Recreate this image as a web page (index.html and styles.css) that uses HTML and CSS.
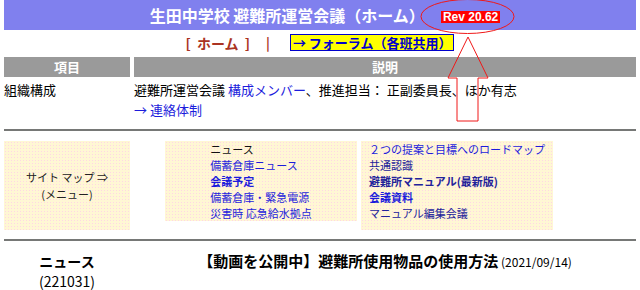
FILE: index.html
```html
<!DOCTYPE html>
<html>

<head>
    <meta charset="utf-8">
    <title>生田中学校 避難所運営会議（ホーム）</title>
    <link rel="stylesheet" href="styles.css">
</head>

<body>
    <header class="title-bar">
        <h1>生田中学校 避難所運営会議（ホーム）</h1>
        <span class="rev">Rev 20.62</span>
    </header>

    <nav class="top-nav">
        <span class="home">[ ホーム ]</span>
        <span class="sep">|</span>
        <a class="forum" href="#">→ フォーラム（各班共用）</a>
    </nav>

    <div class="info">
        <div class="head">項目</div>
        <div class="head">説明</div>
        <div class="cell">組織構成</div>
        <div class="cell">
            避難所運営会議 <a href="#">構成メンバー</a>、推進担当： 正副委員長、ほか有志<br>
            <a href="#">→ 連絡体制</a>
        </div>
    </div>

    <hr class="rule">

    <div class="sitemap">
        <div class="box box-menu">サイト マップ ⇒<br>(メニュー)</div>
        <div class="box box-links">
            <ul>
                <li class="plain">ニュース</li>
                <li><a href="#">備蓄倉庫ニュース</a></li>
                <li><a href="#" class="strong">会議予定</a></li>
                <li><a href="#">備蓄倉庫・緊急電源</a></li>
                <li><a href="#">災害時 応急給水拠点</a></li>
            </ul>
        </div>
        <div class="box box-links tall">
            <ul>
                <li><a href="#">２つの提案と目標へのロードマップ</a></li>
                <li><a href="#" class="visited">共通認識</a></li>
                <li><a href="#" class="strong visited">避難所マニュアル(最新版)</a></li>
                <li><a href="#" class="strong">会議資料</a></li>
                <li><a href="#" class="visited">マニュアル編集会議</a></li>
            </ul>
        </div>
    </div>

    <hr class="rule">

    <div class="news">
        <div class="news-label"><b>ニュース</b><br>(221031)</div>
        <div class="news-body"><b class="headline">【動画を公開中】避難所使用物品の使用方法</b> <span class="date">(2021/09/14)</span></div>
    </div>

    <!-- annotation drawn over the page -->
    <svg class="annot" width="640" height="290" viewBox="0 0 640 290">
        <ellipse cx="467.5" cy="16.5" rx="46.5" ry="17" fill="none" stroke="#f01818" stroke-width="1"/>
        <polygon points="468,37 448,78 457,78 457,121 478,121 478,78 488,78" fill="none" stroke="#f01818" stroke-width="1"/>
    </svg>
</body>

</html>
```

FILE: styles.css
```css
body {
    font-family: "Noto Sans CJK JP", sans-serif;
    font-size: 13px;
    margin: 0;
    padding: 0 4px;
    color: #000;
    background-color: #fff;
}

a {
    color: #1c1cdc;
    text-decoration: none;
}

.title-bar {
    height: 30px;
    background-color: #8080ee;
    display: flex;
    justify-content: center;
    align-items: center;
}

.title-bar h1 {
    margin: 0 0 0 10px;
    color: #fff;
    font-size: 16px;
    line-height: 30px;
    font-weight: bold;
}

.rev {
    margin: 3px 0 0 16px;
    padding: 0 2px;
    background-color: #ff0000;
    color: #fff;
    font-family: "Liberation Sans", Arial, sans-serif;
    font-weight: bold;
    font-size: 12px;
    line-height: 12px;
}

.top-nav {
    margin-top: 4px;
    height: 17px;
    display: flex;
    justify-content: center;
    align-items: center;
    font-size: 13px;
    font-weight: bold;
}

.top-nav .home {
    color: #aa3322;
    font-size: 14px;
    word-spacing: 3px;
}

.top-nav .sep {
    color: #aa3322;
    margin: 0 20px 0 16px;
}

.forum {
    background-color: #ffff00;
    border: 1px solid #0000cc;
    color: #0000cc;
    padding: 0 2px;
    line-height: 15px;
}

.info {
    margin-top: 6px;
    display: grid;
    grid-template-columns: 126px 1fr;
    column-gap: 4px;
}

.info .head {
    height: 20px;
    line-height: 20px;
    background-color: #9a9a9a;
    color: #fff;
    font-weight: bold;
    text-align: center;
}

.info .cell {
    padding-top: 3px;
    line-height: 20px;
}

.rule {
    border: 0;
    border-top: 2px solid #767876;
    margin: 9px 0 10px;
}

.sitemap {
    display: flex;
    align-items: flex-start;
}

.box {
    background-color: #fff7d4;
    background-image: radial-gradient(#ffd6e4 0.7px, transparent 0.9px);
    background-size: 3px 3px;
    font-size: 11px;
}

.box-menu {
    width: 126px;
    height: 89px;
    margin-right: 35px;
    display: flex;
    align-items: center;
    justify-content: center;
    text-align: center;
    line-height: 17px;
    color: #222;
}

.box-links {
    width: 192px;
    margin-right: 4px;
    display: flex;
    justify-content: center;
}

.box-links.tall {
    height: 89px;
}

.box-links ul {
    margin: 0;
    padding: 0;
    list-style: none;
    line-height: 16px;
}

.box-links .plain {
    color: #111;
}

.box-links .strong {
    font-weight: bold;
}

.box-links .visited {
    color: #22229a;
}

.news {
    display: grid;
    grid-template-columns: 126px 1fr;
    column-gap: 4px;
    line-height: 20px;
}

.news-label {
    text-align: center;
    font-size: 14px;
}

.news-body {
    text-align: center;
}

.headline {
    font-size: 15px;
}

.date {
    font-size: 12px;
}

.annot {
    position: absolute;
    top: 0;
    left: 0;
    pointer-events: none;
}
```
